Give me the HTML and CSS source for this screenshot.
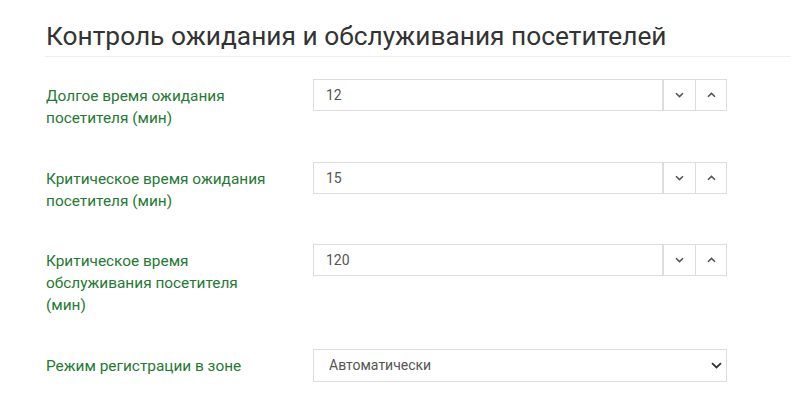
FILE: index.html
```html
<!DOCTYPE html>
<html lang="ru">
<head>
<meta charset="utf-8">
<link rel="stylesheet" href="styles.css">
</head>
<body>
<div class="page">
  <h2 class="title">Контроль ожидания и обслуживания посетителей</h2>
  <form class="form">
    <div class="row">
      <label class="label">Долгое время ожидания посетителя (мин)</label>
      <div class="spin">
        <input class="spin-input" type="text" value="12">
        <button type="button" class="spin-btn"><svg width="9" height="6" viewBox="0 0 9 6"><path d="M1 1.2 4.5 4.6 8 1.2" fill="none" stroke="#555" stroke-width="1.6"/></svg></button>
        <button type="button" class="spin-btn"><svg width="9" height="6" viewBox="0 0 9 6"><path d="M1 4.8 4.5 1.4 8 4.8" fill="none" stroke="#555" stroke-width="1.6"/></svg></button>
      </div>
    </div>
    <div class="row">
      <label class="label">Критическое время ожидания посетителя (мин)</label>
      <div class="spin">
        <input class="spin-input" type="text" value="15">
        <button type="button" class="spin-btn"><svg width="9" height="6" viewBox="0 0 9 6"><path d="M1 1.2 4.5 4.6 8 1.2" fill="none" stroke="#555" stroke-width="1.6"/></svg></button>
        <button type="button" class="spin-btn"><svg width="9" height="6" viewBox="0 0 9 6"><path d="M1 4.8 4.5 1.4 8 4.8" fill="none" stroke="#555" stroke-width="1.6"/></svg></button>
      </div>
    </div>
    <div class="row">
      <label class="label">Критическое время обслуживания посетителя (мин)</label>
      <div class="spin">
        <input class="spin-input" type="text" value="120">
        <button type="button" class="spin-btn"><svg width="9" height="6" viewBox="0 0 9 6"><path d="M1 1.2 4.5 4.6 8 1.2" fill="none" stroke="#555" stroke-width="1.6"/></svg></button>
        <button type="button" class="spin-btn"><svg width="9" height="6" viewBox="0 0 9 6"><path d="M1 4.8 4.5 1.4 8 4.8" fill="none" stroke="#555" stroke-width="1.6"/></svg></button>
      </div>
    </div>
    <div class="row row-last">
      <label class="label">Режим регистрации в зоне</label>
      <div class="select">
        <span class="select-text">Автоматически</span>
        <svg width="11" height="7" viewBox="0 0 11 7"><path d="M1 1.2 5.5 5.5 10 1.2" fill="none" stroke="#333" stroke-width="1.8"/></svg>
      </div>
    </div>
  </form>
</div>
</body>
</html>
```

FILE: styles.css
```css
* { box-sizing: border-box; }
html, body { margin: 0; padding: 0; background: #fff; }
body { font-family: Roboto, "Noto Sans", sans-serif; }
.page { padding: 18px 0 0 45px; }
.title {
  margin: 0;
  padding: 0 0 2px 1px;
  font-size: 26.3px;
  font-weight: 400;
  line-height: 36px;
  color: #333;
  border-bottom: 1px solid #eee;
}
.form { padding-top: 22px; }
.row {
  display: flex;
  align-items: flex-start;
  margin-bottom: 32.5px;
}
.label {
  width: 268px;
  padding: 6px 42px 0 1px;
  font-size: 15.4px;
  line-height: 22px;
  color: #237a32;
}
.spin {
  display: flex;
  width: 414px;
  height: 32px;
  border: 1px solid #ddd;
  background: #fff;
}
.spin-input {
  flex: 1;
  min-width: 0;
  border: 0;
  border-right: 1px solid #ddd;
  padding: 0 12px;
  font: 14px Roboto, sans-serif;
  color: #555;
  outline: none;
  background: #fff;
}
.spin-btn {
  width: 32px;
  border: 0;
  border-left: 1px solid #ddd;
  background: #fff;
  padding: 0;
  display: flex;
  align-items: center;
  justify-content: center;
}
.spin-btn:last-child { width: 31px; }
.select {
  display: flex;
  align-items: center;
  justify-content: space-between;
  width: 414px;
  height: 33px;
  border: 1px solid #ddd;
  padding: 0 4px 0 15px;
  font-size: 14px;
  color: #555;
}
```
